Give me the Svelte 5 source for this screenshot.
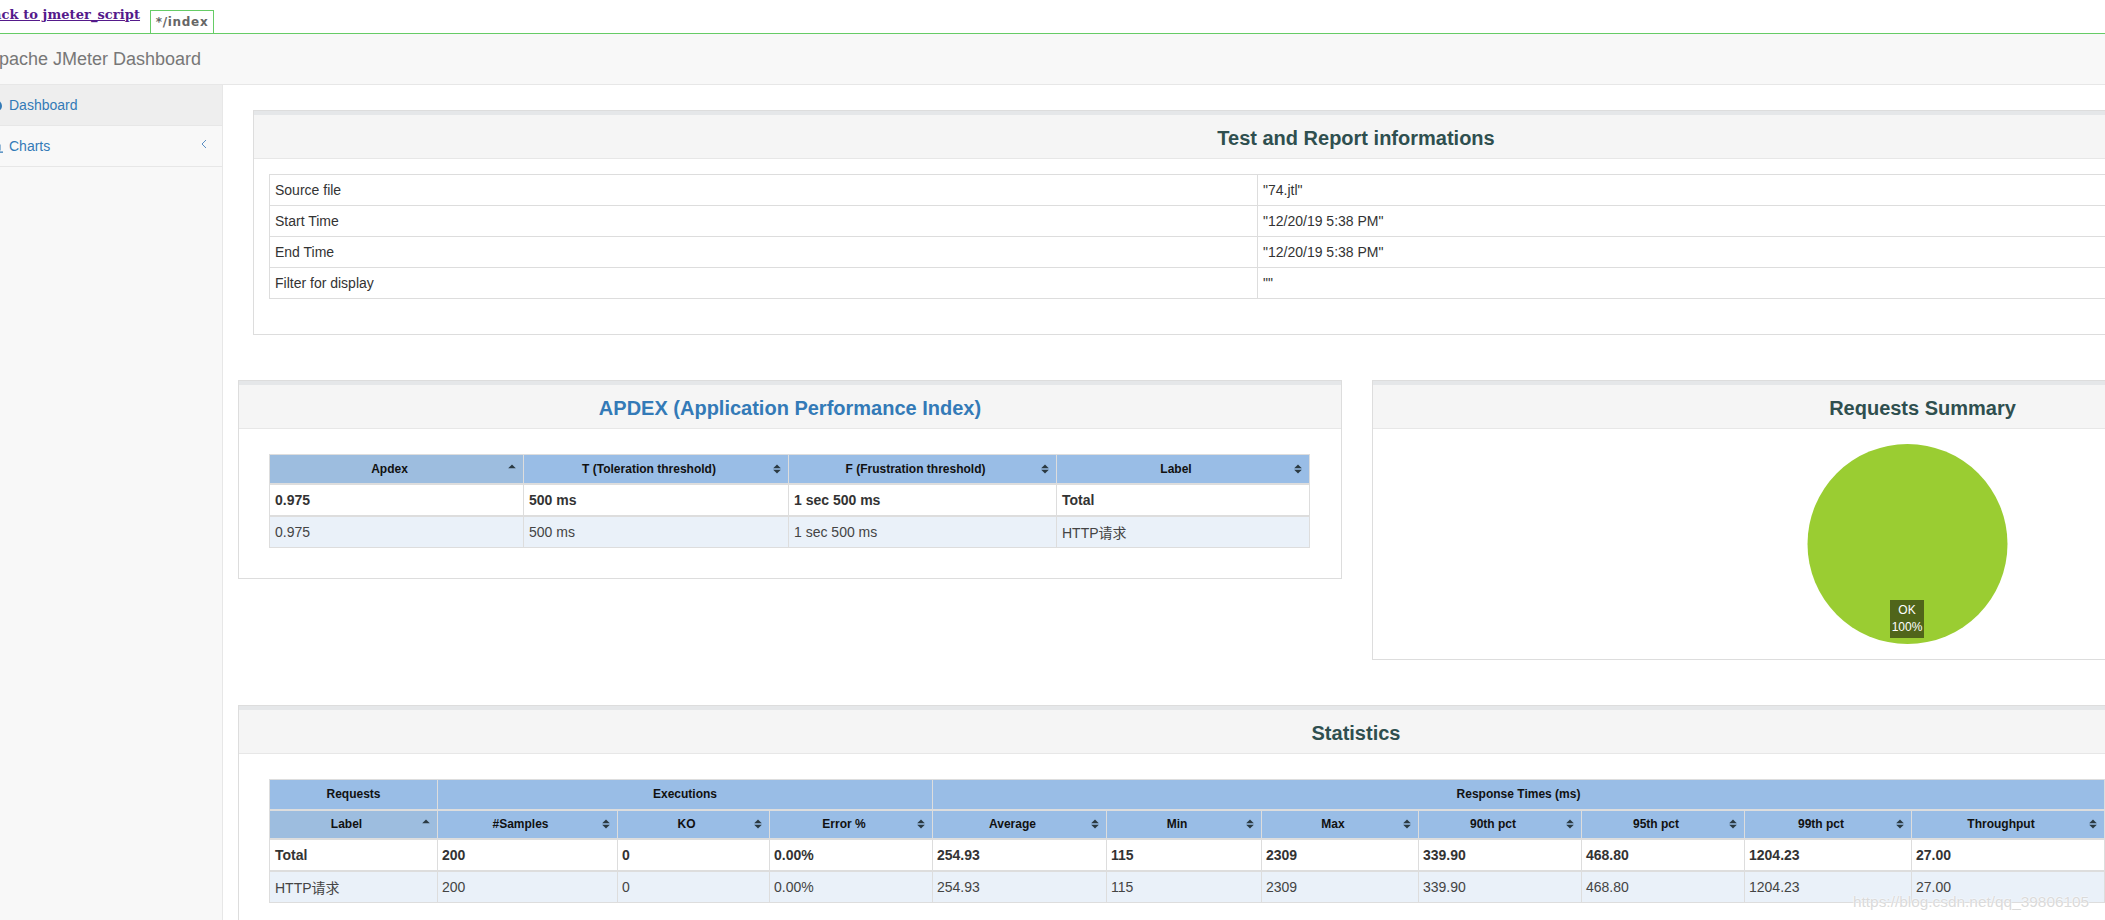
<script>
  const apdexHead = ['Apdex', 'T (Toleration threshold)', 'F (Frustration threshold)', 'Label'];
  const apdexRows = [
    ['0.975', '500 ms', '1 sec 500 ms', 'Total'],
    ['0.975', '500 ms', '1 sec 500 ms', 'HTTP请求']
  ];
  const infoRows = [
    ['Source file', '"74.jtl"'],
    ['Start Time', '"12/20/19 5:38 PM"'],
    ['End Time', '"12/20/19 5:38 PM"'],
    ['Filter for display', '""']
  ];
  const statHead = ['Label', '#Samples', 'KO', 'Error %', 'Average', 'Min', 'Max', '90th pct', '95th pct', '99th pct', 'Throughput'];
  const statRows = [
    ['Total', '200', '0', '0.00%', '254.93', '115', '2309', '339.90', '468.80', '1204.23', '27.00'],
    ['HTTP请求', '200', '0', '0.00%', '254.93', '115', '2309', '339.90', '468.80', '1204.23', '27.00']
  ];
</script>

{#snippet sorter(first)}
  <svg class="sort" viewBox="0 0 8 10" aria-hidden="true">
    <path d="M4 0.4 L7.8 4.3 H0.2 Z" />
    {#if !first}<path d="M4 9.6 L7.8 5.7 H0.2 Z" />{/if}
  </svg>
{/snippet}

<div class="page">
  <div class="shift">
    <div class="crumbs">
      <a class="back" href="#top">Back to jmeter_script</a>
      <span class="tab">*/index</span>
    </div>

    <nav class="navbar"><span class="brand">Apache JMeter Dashboard</span></nav>

    <div class="layout">
      <aside class="sidebar">
        <a class="item active" href="#top">
          <svg class="ico" viewBox="0 0 14 14"><path d="M7 2a6 6 0 0 0-6 6c0 1.5.5 2.8 1.4 3.8h9.2A6 6 0 0 0 13 8a6 6 0 0 0-6-6zm0 7.6a1.6 1.6 0 0 1-1.2-2.6L9.5 4 7.9 8.8A1.6 1.6 0 0 1 7 9.6z" /></svg>
          Dashboard
        </a>
        <a class="item" href="#top">
          <svg class="ico" viewBox="0 0 14 14"><path d="M0 12.5h14v1.2H0zM1 1h1.2v11H1zM3.5 7h2v4.5h-2zM6.5 3.5h2v8h-2zM9.5 5.5h2v6h-2z" /></svg>
          Charts
          <svg class="chev" viewBox="0 0 6 10"><path d="M5 1 1 5l4 4" /></svg>
        </a>
      </aside>

      <main class="main">
        <section class="panel info">
          <header class="head"><h2>Test and Report informations</h2></header>
          <div class="body">
            <table class="plain">
              <colgroup><col class="c-key" /><col /></colgroup>
              <tbody>
                {#each infoRows as r}
                  <tr><td>{r[0]}</td><td>{r[1]}</td></tr>
                {/each}
              </tbody>
            </table>
          </div>
        </section>

        <div class="pair">
          <section class="panel apdex">
            <header class="head"><h2 class="blue">APDEX (Application Performance Index)</h2></header>
            <div class="body">
              <table class="grid">
                <colgroup><col class="a1" /><col class="a2" /><col class="a3" /><col /></colgroup>
                <thead>
                  <tr>
                    {#each apdexHead as h, i}
                      <th class:sorted={i === 0}>{h}{@render sorter(i === 0)}</th>
                    {/each}
                  </tr>
                </thead>
                <tbody>
                  {#each apdexRows as r, ri}
                    <tr class:total={ri === 0} class:odd={ri === 1}>
                      {#each r as c}<td>{c}</td>{/each}
                    </tr>
                  {/each}
                </tbody>
              </table>
            </div>
          </section>

          <section class="panel summary">
            <header class="head"><h2>Requests Summary</h2></header>
            <div class="pie">
              <svg width="1099" height="230" viewBox="0 0 1099 230">
                <circle cx="534.5" cy="115" r="100" fill="#9acd32" />
                <rect x="517" y="171" width="34" height="38" fill="#50651a" />
                <text x="534" y="185" class="pl">OK</text>
                <text x="534" y="202" class="pl">100%</text>
              </svg>
            </div>
          </section>
        </div>

        <section class="panel stats">
          <header class="head"><h2>Statistics</h2></header>
          <div class="body">
            <table class="grid compact">
              <colgroup>
                <col class="s1" /><col class="s2" /><col class="s3" /><col class="s4" /><col class="s5" /><col class="s6" />
                <col class="s7" /><col class="s8" /><col class="s9" /><col class="s10" /><col class="s11" />
              </colgroup>
              <thead>
                <tr class="group">
                  <th>Requests</th>
                  <th colspan="3">Executions</th>
                  <th colspan="7">Response Times (ms)</th>
                </tr>
                <tr>
                  {#each statHead as h, i}
                    <th class:sorted={i === 0}>{h}{@render sorter(i === 0)}</th>
                  {/each}
                </tr>
              </thead>
              <tbody>
                {#each statRows as r, ri}
                  <tr class:total={ri === 0} class:odd={ri === 1}>
                    {#each r as c}<td>{c}</td>{/each}
                  </tr>
                {/each}
              </tbody>
            </table>
          </div>
        </section>
      </main>
    </div>
  </div>
  <div class="watermark">https://blog.csdn.net/qq_39806105</div>
</div>

<style>
  :global(body) { margin: 0; background: #fff; }
  .page {
    width: 2105px; height: 920px; overflow: hidden; position: relative;
    font-family: "Liberation Sans", "Noto Sans CJK SC", sans-serif;
    font-size: 14px; color: #333;
  }
  .shift { margin-left: -27px; width: 2600px; }
  .crumbs { height: 33px; display: flex; align-items: flex-start; box-sizing: content-box; }
  .back {
    font-family: "DejaVu Serif", serif; font-weight: bold; font-size: 13px; letter-spacing: 0.07px; color: #551a8b;
    margin: 7px 0 0 9px; line-height: 16px;
  }
  .tab {
    margin: 10px 0 0 10px; height: 22px; width: 62px; border: 1px solid #66cc66; border-bottom: 0;
    font-family: "DejaVu Sans", sans-serif; font-weight: bold; font-size: 12px; letter-spacing: 0.7px; color: #666;
    line-height: 23px; text-align: center; background: #fff;
  }
  .navbar {
    border-top: 1px solid #66cc66; border-bottom: 1px solid #e7e7e7; background: #f8f8f8;
    height: 50px; display: flex; align-items: center; box-sizing: content-box;
  }
  .brand { font-size: 18px; color: #777; margin-left: 14px; }
  .layout { display: flex; align-items: stretch; }
  .sidebar { width: 249px; height: 900px; flex: none; background: #f8f8f8; border-right: 1px solid #e7e7e7; }
  .item {
    display: flex; align-items: center; height: 40px; border-bottom: 1px solid #e7e7e7;
    color: #337ab7; text-decoration: none; padding-left: 16px; position: relative; line-height: 20px;
  }
  .item.active { background: #eee; }
  .ico { width: 14px; height: 14px; fill: #337ab7; margin-right: 6px; flex: none; }
  .chev { position: absolute; left: 228px; top: 13px; width: 6px; height: 10px; fill: none; stroke: #5b8fc4; stroke-width: 1; }
  .main { padding: 25px 0 0 15px; flex: none; }

  .panel { border: 1px solid #ddd; background: #fff; box-sizing: border-box; }
  .head {
    background: #f5f5f5; border-top: 4px solid #e5e7e9; border-bottom: 1px solid #e7e7e7;
    height: 43px; display: flex; align-items: center; justify-content: center;
    box-sizing: content-box;
  }
  h2 { margin: 2px 0 0; font-size: 20px; font-weight: bold; color: #2f4f4f; line-height: 24px; }
  h2.blue { color: #337ab7; }

  .info { margin-left: 15px; width: 2206px; height: 225px; }
  .info .body { padding: 15px; }
  .pair { display: flex; margin-top: 45px; align-items: flex-start; }
  .apdex { width: 1104px; height: 199px; }
  .apdex .body { padding: 25px 30px; }
  .apdex .grid { width: 1041px; }
  .summary { width: 1101px; height: 280px; margin-left: 30px; }
  .pie svg { display: block; }
  .pl { fill: #fff; font-size: 12px; text-anchor: middle; font-family: "Liberation Sans", sans-serif; }
  .stats { margin-top: 45px; width: 2236px; height: 300px; }
  .stats .body { padding: 25px 30px; }
  .stats .grid { width: 1836px; }

  table { border-collapse: collapse; table-layout: fixed; }
  .plain { width: 2174px; }
  .c-key { width: 988px; }
  .plain td { border: 1px solid #ddd; padding: 0 5px; height: 30px; line-height: 20px; }

  .a1 { width: 254px; } .a2 { width: 265px; } .a3 { width: 268px; }
  .s1 { width: 168px; } .s2 { width: 180px; } .s3 { width: 152px; } .s4 { width: 163px; }
  .s5 { width: 174px; } .s6 { width: 155px; } .s7 { width: 157px; } .s8 { width: 163px; }
  .s9 { width: 163px; } .s10 { width: 167px; } .s11 { width: 193px; }

  .grid th {
    background: #99bde6; color: #111; font-size: 12px; font-weight: bold; height: 29px; padding: 0 18px 0 4px;
    border: 1px solid #ddd; border-bottom-width: 2px; text-align: center; position: relative; box-sizing: border-box;
  }
  .grid th.sorted { background: #9dbddf; }
  .grid .group th { padding: 0 4px; height: 30px; }
  .sort { position: absolute; right: 7px; top: 50%; margin-top: -5px; width: 8px; height: 10px; fill: #2b3a42; }
  .grid td {
    border: 1px solid #ddd; border-top-width: 2px; padding: 0 5px; height: 32px; box-sizing: border-box;
    white-space: nowrap; overflow: hidden;
  }
  .compact td { padding: 0 4px; }
  .compact td:first-child { padding-left: 5px; }
  .total td { font-weight: bold; background: #fff; }
  .odd td { background: #eaf1f9; font-weight: normal; color: #444; border-top-width: 2px; }

  .watermark {
    position: absolute; left: 1853px; top: 892px; font-size: 15.4px; line-height: 20px; color: #dadada;
    text-shadow: 0 0 2px #fff, 0 0 1px #fff; white-space: nowrap;
  }
</style>
